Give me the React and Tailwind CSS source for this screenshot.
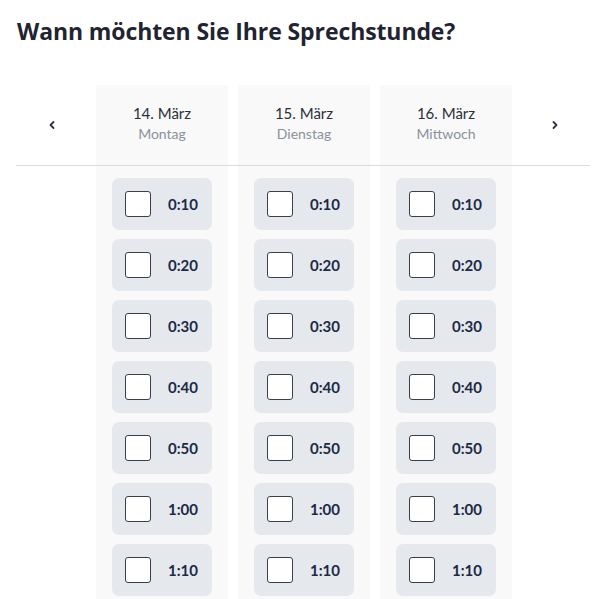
import React from 'react'

const days = [
  { date: '14. März', day: 'Montag' },
  { date: '15. März', day: 'Dienstag' },
  { date: '16. März', day: 'Mittwoch' },
]

const times = ['0:10', '0:20', '0:30', '0:40', '0:50', '1:00', '1:10']

function Chevron({ dir }) {
  return (
    <svg width="8" height="12" viewBox="0 0 8 12" fill="none">
      <path
        d={dir === 'left' ? 'M5.5 3L2.5 6L5.5 9' : 'M2.5 3L5.5 6L2.5 9'}
        stroke="#2a3346"
        strokeWidth="1.8"
        strokeLinecap="round"
        strokeLinejoin="round"
      />
    </svg>
  )
}

export default function App() {
  return (
    <div className="w-[600px] h-[599px] overflow-hidden bg-white" style={{ fontFamily: 'Lato, "Noto Sans", sans-serif' }}>
      <h1
        className="pl-[17px] pt-[17px] text-[23px] font-bold text-[#1f2430] leading-[29px] tracking-[-0.1px]"
        style={{ fontFamily: '"Open Sans", sans-serif' }}
      >
        Wann möchten Sie Ihre Sprechstunde?
      </h1>

      <div className="mt-[39px] pl-[16px] pr-[10px]">
        {/* header row */}
        <div className="flex border-b border-[#d9dbe0] h-[81px]">
          <div className="w-[80px] flex items-center pl-[32px]">
            <Chevron dir="left" />
          </div>
          <div className="flex gap-[10px]">
            {days.map((d) => (
              <div key={d.date} className="w-[132px] bg-[#f9f9f9] flex flex-col items-center pt-[18px]">
                <div className="text-[15px] text-[#2b2f38] leading-[20px]">{d.date}</div>
                <div className="text-[14px] text-[#8b919c] leading-[22px]">{d.day}</div>
              </div>
            ))}
          </div>
          <div className="flex-1 flex items-center pl-[39px]">
            <Chevron dir="right" />
          </div>
        </div>

        {/* slots */}
        <div className="flex">
          <div className="w-[80px]" />
          <div className="flex gap-[10px]">
            {days.map((d) => (
              <div key={d.date} className="w-[132px] bg-[#f9f9f9] flex flex-col items-center gap-[9px] pt-[12px] pb-[20px]">
                {times.map((t) => (
                  <label key={t} className="w-[100px] h-[52px] rounded-[7px] bg-[#e5e8ed] flex items-center pl-[13px]">
                    <span className="w-[26px] h-[26px] bg-white border-[1.5px] border-[#3a3f4a] rounded-[3px]" />
                    <span className="ml-[17px] text-[15px] font-bold text-[#1c2a45]">{t}</span>
                  </label>
                ))}
              </div>
            ))}
          </div>
        </div>
      </div>
    </div>
  )
}
